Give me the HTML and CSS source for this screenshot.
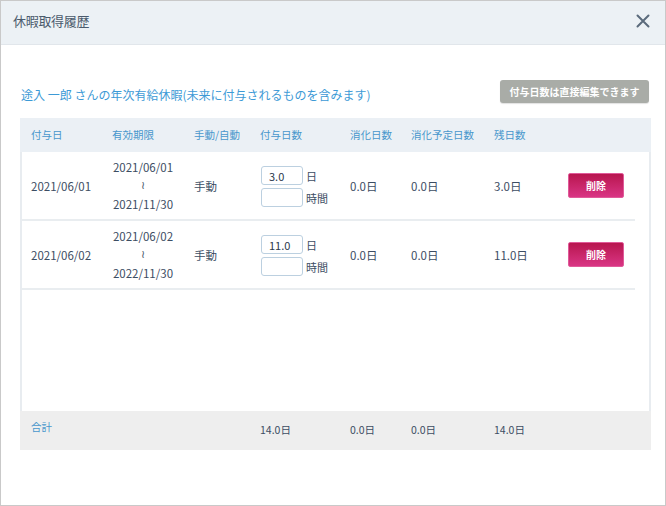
FILE: index.html
```html
<!DOCTYPE html>
<html lang="ja">
<head>
<meta charset="utf-8">
<title>休暇取得履歴</title>
<link rel="stylesheet" href="styles.css">
</head>
<body>
<div class="dialog">
  <header class="dlg-head">
    <h1 class="dlg-title">休暇取得履歴</h1>
    <button class="close" aria-label="閉じる">
      <svg width="14" height="14" viewBox="0 0 14 14"><path d="M1.5 1.5 L12.5 12.5 M12.5 1.5 L1.5 12.5" stroke="#5b6b7c" stroke-width="2" stroke-linecap="round" fill="none"/></svg>
    </button>
  </header>
  <main class="dlg-body">
    <div class="caption-row">
      <p class="caption">途入 一郎 さんの年次有給休暇(未来に付与されるものを含みます)</p>
      <button class="note-btn">付与日数は直接編集できます</button>
    </div>
    <div class="table">
      <div class="thead cols">
        <div class="cell">付与日</div>
        <div class="cell">有効期限</div>
        <div class="cell">手動/自動</div>
        <div class="cell">付与日数</div>
        <div class="cell">消化日数</div>
        <div class="cell">消化予定日数</div>
        <div class="cell">残日数</div>
        <div class="cell"></div>
      </div>
      <div class="tbody">
        <div class="row cols">
          <div class="cell">2021/06/01</div>
          <div class="cell period"><span>2021/06/01</span><span class="wave">≀</span><span>2021/11/30</span></div>
          <div class="cell">手動</div>
          <div class="cell grant">
            <div class="grant-line"><input class="num" type="text" value="3.0"><span>日</span></div>
            <div class="grant-line"><input class="num" type="text" value=""><span>時間</span></div>
          </div>
          <div class="cell">0.0日</div>
          <div class="cell">0.0日</div>
          <div class="cell">3.0日</div>
          <div class="cell action"><button class="del-btn">削除</button></div>
        </div>
        <div class="row cols">
          <div class="cell">2021/06/02</div>
          <div class="cell period"><span>2021/06/02</span><span class="wave">≀</span><span>2022/11/30</span></div>
          <div class="cell">手動</div>
          <div class="cell grant">
            <div class="grant-line"><input class="num" type="text" value="11.0"><span>日</span></div>
            <div class="grant-line"><input class="num" type="text" value=""><span>時間</span></div>
          </div>
          <div class="cell">0.0日</div>
          <div class="cell">0.0日</div>
          <div class="cell">11.0日</div>
          <div class="cell action"><button class="del-btn">削除</button></div>
        </div>
      </div>
      <div class="tfoot cols">
        <div class="cell total-label">合計</div>
        <div class="cell"></div>
        <div class="cell"></div>
        <div class="cell">14.0日</div>
        <div class="cell">0.0日</div>
        <div class="cell">0.0日</div>
        <div class="cell">14.0日</div>
        <div class="cell"></div>
      </div>
    </div>
  </main>
</div>
</body>
</html>
```

FILE: styles.css
```css
* { box-sizing: border-box; }
html, body { margin: 0; padding: 0; background: #ffffff; }
body {
  font-family: "Noto Sans CJK JP", "Noto Sans", sans-serif;
  color: #3c4d63;
}
.dialog {
  width: 666px;
  height: 506px;
  border: 1px solid #c9c9c9;
  background: #ffffff;
  display: flex;
  flex-direction: column;
}
.dlg-head {
  height: 44px;
  flex: none;
  background: #ecf1f5;
  border-bottom: 1px solid #e1e6eb;
  display: flex;
  align-items: center;
  justify-content: space-between;
  padding: 0 15px 4px 12px;
}
.dlg-title {
  margin: 0;
  font-size: 13px;
  font-weight: normal;
  color: #4a5a6c;
  letter-spacing: -0.3px;
}
.close {
  border: 0;
  background: transparent;
  padding: 0;
  width: 14px;
  height: 14px;
  display: flex;
}
.dlg-body {
  padding: 35px 16px 0 18px;
}
.caption-row {
  height: 23px;
  display: flex;
  justify-content: space-between;
  align-items: flex-start;
}
.caption {
  margin: 0;
  padding: 6px 0 0 2px;
  font-size: 12px;
  line-height: 18px;
  color: #3d9ad6;
  white-space: nowrap;
}
.note-btn {
  width: 149px;
  height: 23px;
  border: 0;
  border-radius: 3px;
  background: #a9aca7;
  color: #ffffff;
  font-family: inherit;
  font-size: 10px;
  font-weight: bold;
  padding: 0;
  box-shadow: 0 1px 1px rgba(0,0,0,0.12);
}
.table {
  margin-top: 15px;
  margin-left: 1px;
  width: 631px;
}
.cols {
  display: grid;
  grid-template-columns: 82px 82px 66px 90px 61px 83px 55px 96px;
}
.cell {
  padding-left: 10px;
  font-size: 11.5px;
  white-space: nowrap;
}
.cols > .cell:first-child { padding-left: 11px; }
.thead {
  height: 34px;
  background: #ebf0f5;
  align-items: center;
}
.thead .cell {
  font-size: 10.5px;
  color: #4897cc;
  padding-bottom: 1px;
}
.tbody {
  height: 259px;
  border: 2px solid #e8ecf0;
  border-top: 0;
  border-bottom: 0;
}
.tbody .cols {
  grid-template-columns: 80px 82px 66px 90px 61px 83px 55px 96px;
  width: 613px;
}
.row {
  height: 69px;
  border-bottom: 2px solid #e9edf0;
  align-items: center;
}
.row > .cell:first-child { padding-left: 9px; }
.period {
  padding-left: 0;
  display: flex;
  flex-direction: column;
  align-items: center;
  line-height: 18.5px;
  padding-top: 1px;
}
.wave {
  font-family: "DejaVu Sans", sans-serif;
  font-size: 11px;
  line-height: 18.5px;
  color: #4a5a6c;
}
.grant {
  display: flex;
  flex-direction: column;
  gap: 3px;
  padding-top: 2px;
  padding-left: 11px;
}
.grant-line {
  display: flex;
  align-items: center;
  gap: 3px;
  font-size: 11px;
}
.num {
  width: 42px;
  height: 19px;
  border: 1px solid #bcd0e0;
  border-radius: 3px;
  padding: 0 0 0 7px;
  font-family: inherit;
  font-size: 11px;
  color: #2c3a4c;
  background: #ffffff;
}
.action { padding-left: 29px; }
.del-btn {
  width: 56px;
  height: 25px;
  border: 1px solid #e05a99;
  border-radius: 2px;
  background: linear-gradient(#b8164f, #d93584);
  color: #ffffff;
  font-family: inherit;
  font-size: 10px;
  font-weight: bold;
  padding: 0;
}
.tfoot {
  height: 39px;
  background: #eeeeee;
  align-items: start;
  padding-top: 10px;
}
.tfoot .cell {
  font-size: 10.5px;
  color: #3c4d63;
  padding-top: 1px;
}
.tfoot .total-label {
  color: #4897cc;
  padding-top: 0;
  margin-top: -2px;
}
```
